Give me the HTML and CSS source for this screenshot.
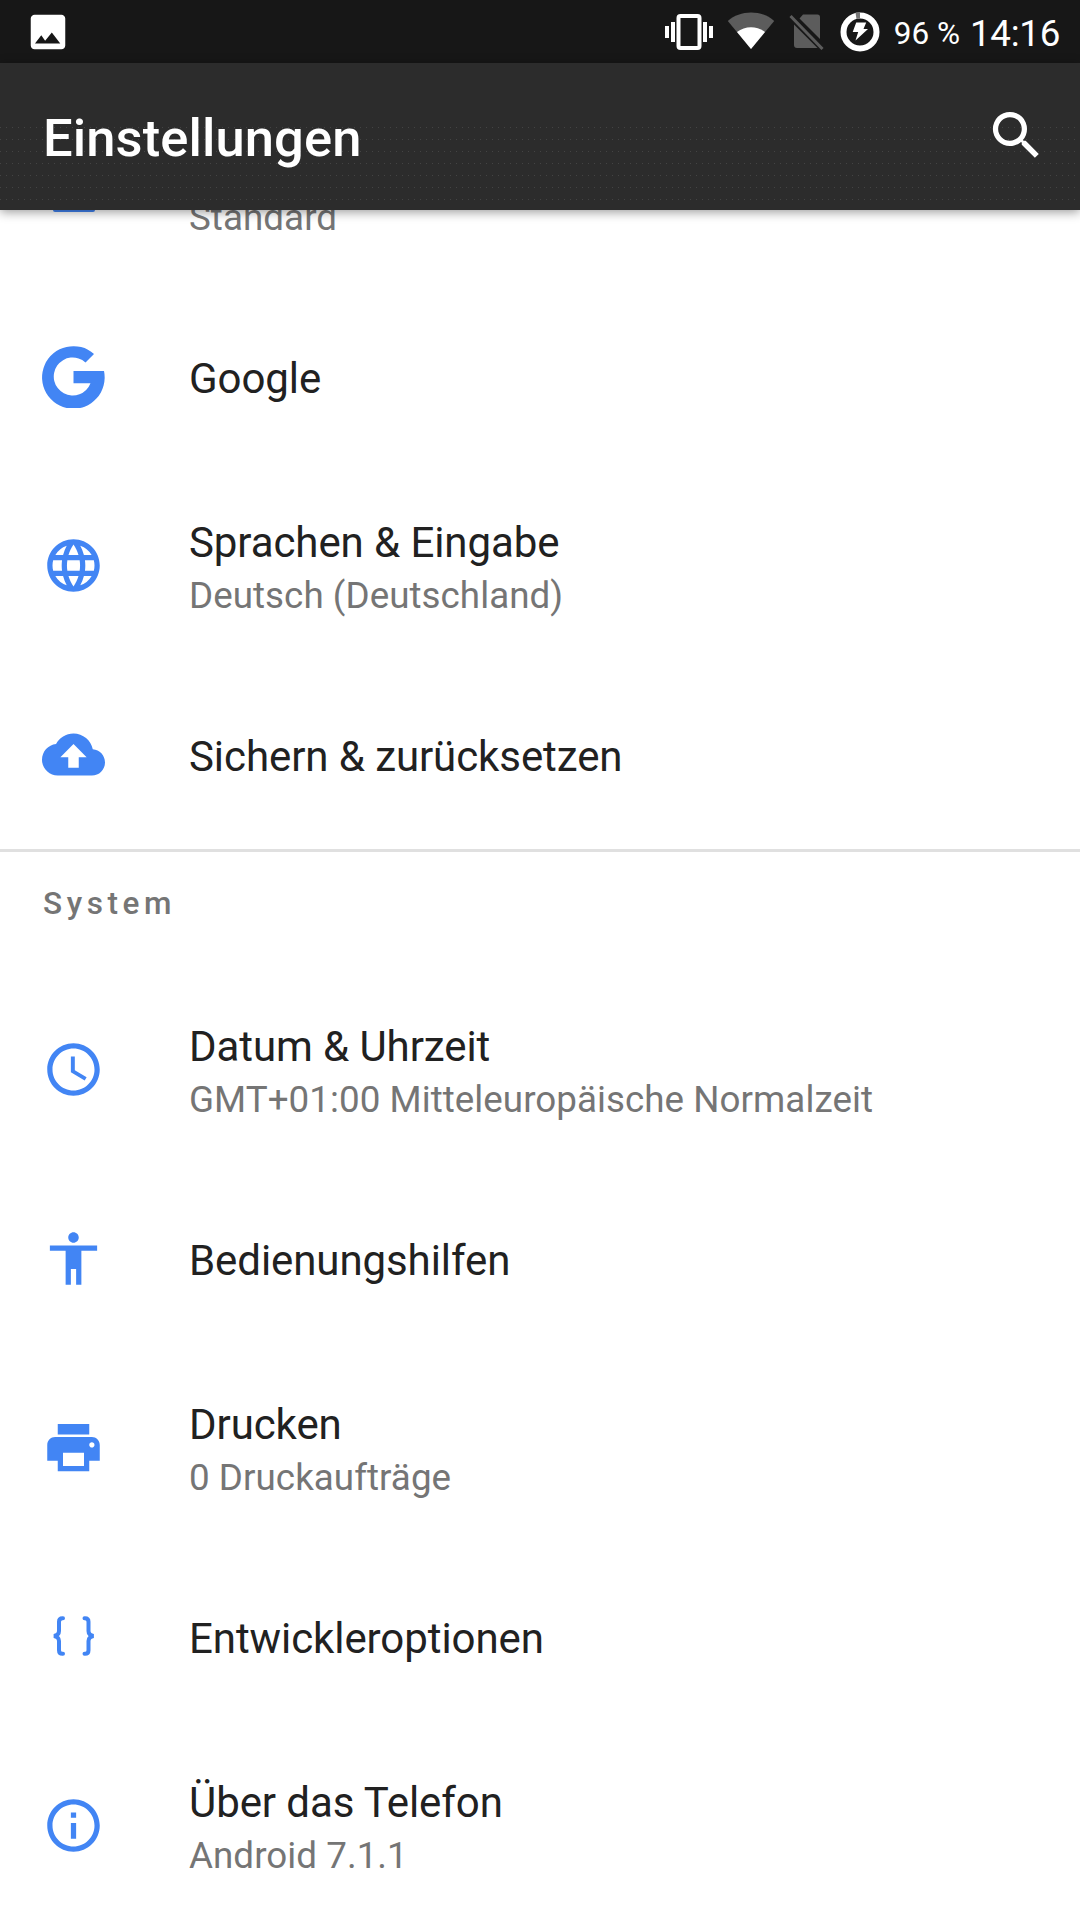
FILE: index.html
```html
<!DOCTYPE html>
<html lang="de">
<head>
<meta charset="utf-8">
<title>Einstellungen</title>
<link rel="stylesheet" href="styles.css">
</head>
<body>
<div class="screen">
  <header class="statusbar">
    <svg class="notification" viewBox="0 0 24 24"><path fill="#fff" d="M21 19V5c0-1.100-.9-2-2-2H5c-1.100 0-2 .9-2 2v14c0 1.100.9 2 2 2h14c1.100 0 2-.9 2-2zM5.200 18l3.300-4.300 2 2.900 3.500-4.400 4.400 5.800z"/></svg>
    <div class="status-icons">
      <svg class="vibrate" viewBox="0 0 48 36" fill="#fff"><path d="M0 12h4v12H0zM6 8h4v20H6zM38 8h4v20h-4zM44 12h4v12h-4z"/><rect x="13.500" y="2" width="21" height="32" rx="2" fill="none" stroke="#fff" stroke-width="4"/></svg>
      <svg class="wifi" viewBox="0 0 48 38"><path fill="#5c5c5c" d="M24 37 .8 9C13-2.500 35-2.500 47.200 9z"/><path fill="#fff" d="M24 37 10 20c8-6.500 20-6.500 28 0z"/></svg>
      <svg class="nosim" viewBox="0 0 36 36"><path fill="#5c5c5c" d="M14 .5h14.500q2.500 0 2.500 2.500v22L10.500 4.500zM5 10.500 28.500 34H8q-3 0-3-3z"/><path stroke="#5c5c5c" stroke-width="3" d="m1.500 2 32 33"/></svg>
      <svg class="battery" viewBox="0 0 40 40"><circle cx="20" cy="20" r="16.500" fill="none" stroke="#fff" stroke-width="6"/><path fill="#777" d="M15.500 .8 20 .4v6.200l-3.500.4z"/><path fill="#fff" d="M16.200 10.500h10L23.500 17H28L15.500 28.500 18.200 20h-5.500z"/></svg>
      <span class="percent">96 %</span>
      <span class="clock">14:16</span>
    </div>
  </header>
  <div class="toolbar">
    <h1 class="toolbar-title">Einstellungen</h1>
    <svg class="search" viewBox="0 0 24 24"><path fill="#fff" d="M15.500 14h-.79l-.28-.27A6.471 6.471 0 0 0 16 9.500 6.500 6.500 0 1 0 9.500 16c1.610 0 3.090-.59 4.230-1.570l.27.280v.79l5 4.990L20.490 19l-4.990-5zm-6 0C7.010 14 5 11.990 5 9.500S7.010 5 9.500 5 14 7.010 14 9.500 11.990 14 9.500 14z"/></svg>
  </div>
  <main class="list">
    <section class="group">
      <div class="row row-clipped">
        <span class="icon-cell"><span class="icon-edge"></span></span>
        <div class="text"><div class="summary">Standard</div></div>
      </div>
      <div class="row">
        <span class="icon-cell"><svg class="icon" viewBox="0 0 63 63"><path d="M52 8.900A31.300 31.300 0 1 0 62 26H31.500v12.300h17A19 19 0 1 1 43.500 17.400z"/></svg></span>
        <div class="text"><div class="title">Google</div></div>
      </div>
      <div class="row">
        <span class="icon-cell"><svg class="icon" viewBox="0 0 24 24"><path d="M11.990 2C6.470 2 2 6.480 2 12s4.470 10 9.990 10C17.520 22 22 17.520 22 12S17.520 2 11.990 2zm6.930 6h-2.950a15.650 15.650 0 0 0-1.380-3.560A8.030 8.030 0 0 1 18.920 8zM12 4.040c.83 1.200 1.480 2.530 1.910 3.960h-3.820c.43-1.430 1.080-2.760 1.910-3.960zM4.260 14C4.100 13.360 4 12.690 4 12s.1-1.360.26-2h3.380c-.08.66-.14 1.320-.14 2s.06 1.340.14 2H4.260zm.82 2h2.950c.32 1.250.78 2.450 1.380 3.560A7.987 7.987 0 0 1 5.080 16zm2.950-8H5.080a7.987 7.987 0 0 1 4.330-3.560A15.650 15.650 0 0 0 8.030 8zM12 19.960c-.83-1.200-1.480-2.530-1.910-3.960h3.820c-.43 1.430-1.080 2.760-1.910 3.960zM14.340 14H9.660c-.09-.66-.16-1.320-.16-2s.07-1.350.16-2h4.680c.09.650.16 1.320.16 2s-.07 1.340-.16 2zm.25 5.560c.6-1.110 1.060-2.310 1.380-3.560h2.950a8.030 8.030 0 0 1-4.330 3.560zM16.360 14c.08-.66.14-1.320.14-2s-.06-1.340-.14-2h3.380c.16.640.26 1.310.26 2s-.1 1.360-.26 2h-3.380z"/></svg></span>
        <div class="text"><div class="title">Sprachen &amp; Eingabe</div><div class="summary">Deutsch (Deutschland)</div></div>
      </div>
      <div class="row">
        <span class="icon-cell"><svg class="icon" viewBox="0 0 24 24"><path d="M19.350 10.040C18.670 6.590 15.640 4 12 4 9.110 4 6.600 5.640 5.350 8.040 2.340 8.360 0 10.910 0 14c0 3.310 2.690 6 6 6h13c2.760 0 5-2.240 5-5 0-2.640-2.050-4.780-4.650-4.960zM14 13v4h-4v-4H7l5-5 5 5h-3z"/></svg></span>
        <div class="text"><div class="title">Sichern &amp; zurücksetzen</div></div>
      </div>
    </section>
    <section class="group group-system">
      <h2 class="group-title">System</h2>
      <div class="row">
        <span class="icon-cell"><svg class="icon" viewBox="0 0 24 24"><path d="M11.990 2C6.470 2 2 6.480 2 12s4.470 10 9.990 10C17.520 22 22 17.520 22 12S17.520 2 11.990 2zM12 20c-4.420 0-8-3.580-8-8s3.580-8 8-8 8 3.580 8 8-3.580 8-8 8zm.5-13H11v6l5.250 3.150.75-1.230-4.500-2.670z"/></svg></span>
        <div class="text"><div class="title">Datum &amp; Uhrzeit</div><div class="summary">GMT+01:00 Mitteleuropäische Normalzeit</div></div>
      </div>
      <div class="row">
        <span class="icon-cell"><svg class="icon" viewBox="0 0 24 24"><path d="M12 2c1.100 0 2 .9 2 2s-.9 2-2 2-2-.9-2-2 .9-2 2-2zm9 7h-6v13h-2v-6h-2v6H9V9H3V7h18v2z"/></svg></span>
        <div class="text"><div class="title">Bedienungshilfen</div></div>
      </div>
      <div class="row">
        <span class="icon-cell"><svg class="icon" viewBox="0 0 24 24"><path d="M19 8H5c-1.660 0-3 1.340-3 3v6h4v4h12v-4h4v-6c0-1.660-1.340-3-3-3zm-3 11H8v-5h8v5zm3-7c-.55 0-1-.45-1-1s.45-1 1-1 1 .45 1 1-.45 1-1 1zm-1-9H6v4h12V3z"/></svg></span>
        <div class="text"><div class="title">Drucken</div><div class="summary">0 Druckaufträge</div></div>
      </div>
      <div class="row">
        <span class="icon-cell"><svg class="icon icon-line" viewBox="0 0 63 63"><path d="M21 13.300h-.5q-3.500 0-3.500 3.500V26q0 4-5 5 5 1 5 5v9.200q0 3.500 3.500 3.500h.5M42.500 13.300h.5q3.500 0 3.500 3.500V26q0 4 5 5-5 1-5 5v9.200q0 3.500-3.500 3.500h-.5"/></svg></span>
        <div class="text"><div class="title">Entwickleroptionen</div></div>
      </div>
      <div class="row">
        <span class="icon-cell"><svg class="icon" viewBox="0 0 24 24"><path d="M11 17h2v-6h-2v6zm1-15C6.480 2 2 6.480 2 12s4.480 10 10 10 10-4.480 10-10S17.520 2 12 2zm0 18c-4.410 0-8-3.590-8-8s3.590-8 8-8 8 3.590 8 8-3.590 8-8 8zM11 9h2V7h-2v2z"/></svg></span>
        <div class="text"><div class="title">Über das Telefon</div><div class="summary">Android 7.1.1</div></div>
      </div>
    </section>
  </main>
</div>
</body>
</html>
```
FILE: styles.css
```css
* { box-sizing: border-box; }

body {
  margin: 0;
  font-family: Roboto, "Liberation Sans", sans-serif;
  background: #fff;
}

svg { display: block; flex: none; }

.screen {
  width: 1080px;
  height: 1920px;
  overflow: hidden;
  display: flex;
  flex-direction: column;
}

.statusbar {
  height: 63px;
  flex: none;
  display: flex;
  align-items: flex-start;
  justify-content: space-between;
  padding: 0 20px 0 25px;
  background: #171717;
  color: #fff;
}

.notification { width: 46px; height: 46px; margin-top: 8.500px; }

.status-icons { display: flex; align-items: flex-start; white-space: nowrap; }
.vibrate { width: 48px; height: 36px; margin-top: 14px; }
.wifi { width: 48px; height: 38px; margin: 12px 0 0 14px; }
.nosim { width: 36px; height: 36px; margin: 14px 0 0 14px; }
.battery { width: 40px; height: 40px; margin: 12px 0 0 15px; }
.percent { font-size: 31.500px; line-height: 37px; margin: 15px 0 0 14px; }
.clock { font-size: 36.750px; line-height: 43px; letter-spacing: -.3px; margin: 12px 0 0 10px; }

.toolbar {
  height: 147px;
  flex: none;
  display: flex;
  align-items: center;
  justify-content: space-between;
  padding: 0 32px 0 43px;
  color: #fff;
  /* Fine dotted texture on the lower part of the bar only */
  background:
    linear-gradient(#2c2c2c, #2c2c2c) 0 0 / 100% 63px no-repeat,
    radial-gradient(circle at .5px .5px, #444 .6px, transparent .8px) 0 64px / 6px 12px,
    #2c2c2c;
  box-shadow: 0 2px 10px rgba(0, 0, 0, .4);
  z-index: 1;
}

.toolbar-title { margin: 2px 0 0; font-size: 52.500px; font-weight: 500; line-height: 62px; letter-spacing: .1px; }
.search { width: 63px; height: 63px; margin-top: -3px; }

.row { height: 189px; display: flex; align-items: center; }
.row-clipped { height: 73px; align-items: flex-start; }
.row-clipped .text { margin-top: -24px; }
.row-clipped + .row { margin-top: -1px; }

.text { padding-top: 3px; }
.icon-cell { width: 189px; flex: none; padding-left: 42px; }
.icon { width: 63px; height: 63px; fill: #4285f4; }
.icon-line { fill: none; stroke: #4285f4; stroke-width: 4; stroke-linecap: round; }
.icon-edge { display: block; width: 42px; height: 2px; margin-left: 11px; background: #4285f4; border-radius: 0 0 2px 2px; }

.title { font-size: 42px; line-height: 49px; letter-spacing: -.08px; color: #212121; }
.summary { font-size: 36.750px; line-height: 43px; letter-spacing: .05px; color: #757575; margin-top: 7px; }

.group-system { border-top: 3px solid #e0e0e0; }
.group-title {
  height: 123px;
  margin: 0;
  padding: 33px 0 0 43px;
  font-size: 31.500px;
  font-weight: 500;
  line-height: 38px;
  letter-spacing: 4.600px;
  color: #757575;
}
```
